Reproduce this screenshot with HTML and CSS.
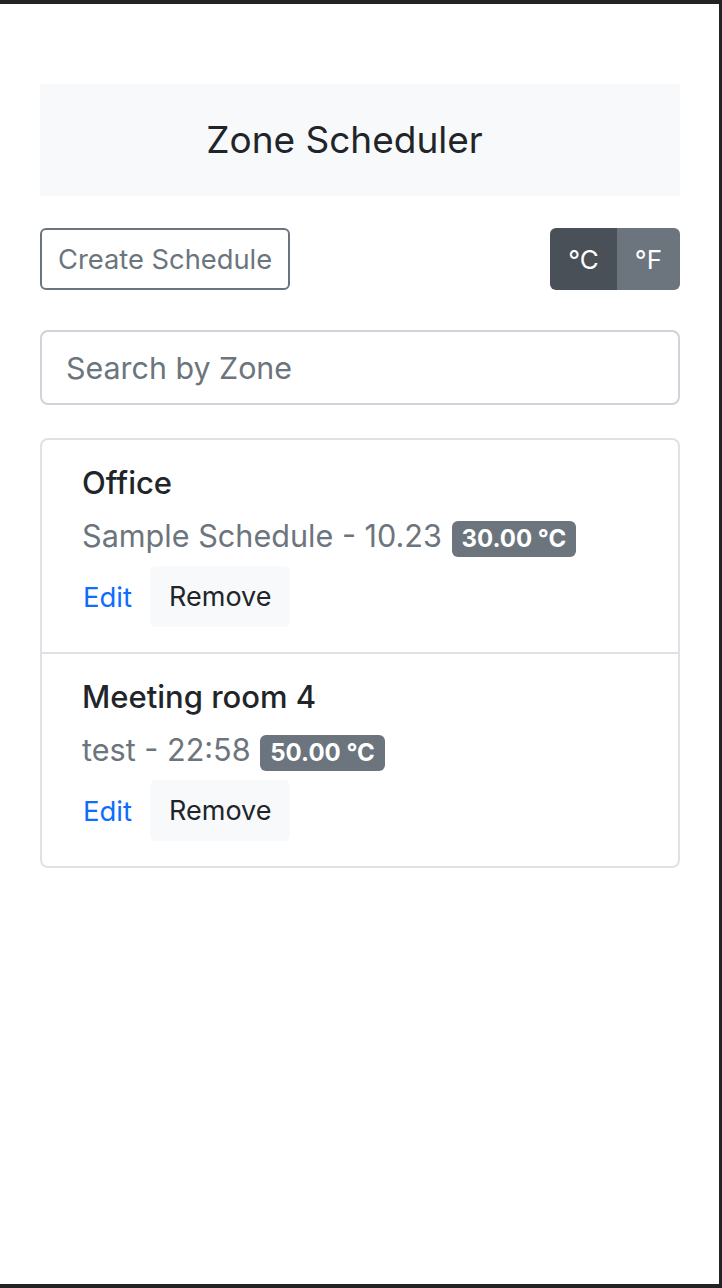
FILE: index.html
```html
<!DOCTYPE html>
<html lang="en">
<head>
<meta charset="utf-8">
<title>Zone Scheduler</title>
<link rel="stylesheet" href="styles.css">
</head>
<body>
<div class="frame">
  <main class="container">
    <header class="page-header">
      <h1 class="page-title">Zone Scheduler</h1>
    </header>
    <div class="toolbar">
      <button class="btn-outline" type="button">Create Schedule</button>
      <div class="unit-toggle">
        <button class="unit unit-active" type="button">°C</button>
        <button class="unit" type="button">°F</button>
      </div>
    </div>
    <input class="search" type="text" placeholder="Search by Zone">
    <ul class="list">
      <li class="item">
        <h5 class="item-title">Office</h5>
        <p class="item-text">Sample Schedule - 10.23 <span class="badge">30.00 °C</span></p>
        <div class="actions">
          <a class="link" href="#">Edit</a>
          <button class="btn-light" type="button">Remove</button>
        </div>
      </li>
      <li class="item">
        <h5 class="item-title">Meeting room 4</h5>
        <p class="item-text">test - 22:58 <span class="badge">50.00 °C</span></p>
        <div class="actions">
          <a class="link" href="#">Edit</a>
          <button class="btn-light" type="button">Remove</button>
        </div>
      </li>
    </ul>
  </main>
</div>
</body>
</html>
```

FILE: styles.css
```css
* { box-sizing: border-box; }
html, body { margin: 0; padding: 0; background: #fff; }
body {
  font-family: Inter, "Noto Sans", "Liberation Sans", sans-serif;
  color: #212529;
}
.frame {
  height: 1288px;
  border-top: 4px solid #232323;
  border-right: 3px solid #232323;
  border-bottom: 4px solid #232323;
}
.container {
  width: 640px;
  margin-left: 40px;
  padding-top: 80px;
  display: flex;
  flex-direction: column;
}
.page-header {
  height: 112px;
  background: #f8f9fa;
  display: flex;
  align-items: center;
  justify-content: center;
  padding-right: 31px;
}
.page-title {
  margin: 0;
  font-size: 37px;
  font-weight: 400;
  line-height: 1.2;
  color: #212529;
}
.toolbar {
  margin-top: 32px;
  display: flex;
  justify-content: space-between;
  align-items: center;
}
.btn-outline {
  height: 62px;
  padding: 0 16px;
  border: 2px solid #6c757d;
  border-radius: 6px;
  background: #fff;
  color: #6c757d;
  font-family: inherit;
  font-size: 27.3px;
}
.unit-toggle {
  display: flex;
  height: 62px;
  border-radius: 6px;
  overflow: hidden;
}
.unit {
  border: 0;
  padding: 0 18px;
  background: #6c757d;
  color: #fff;
  font-family: inherit;
  font-size: 26px;
}
.unit-active { background: #495057; }
.search {
  margin-top: 40px;
  height: 75px;
  width: 100%;
  padding: 0 24px;
  border: 2px solid #ced4da;
  border-radius: 8px;
  font-family: inherit;
  font-size: 30.4px;
  color: #495057;
}
.search::placeholder { color: #6c757d; opacity: 1; }
.list {
  margin: 33px 0 0;
  padding: 0;
  list-style: none;
  border: 2px solid #dee2e6;
  border-radius: 8px;
}
.item {
  padding: 25px 40px 25px;
}
.item + .item { border-top: 2px solid #dee2e6; }
.item-title {
  margin: 0 0 12px;
  font-size: 31px;
  font-weight: 450;
  line-height: 36px;
  color: #212529;
}
.item-text {
  margin: 0;
  font-size: 30.6px;
  line-height: 45px;
  color: #6c757d;
}
.badge {
  display: inline-block;
  margin-left: 1px;
  padding: 6px 10px;
  border-radius: 6px;
  background: #6c757d;
  color: #fff;
  font-size: 24px;
  font-weight: 700;
  line-height: 24px;
  vertical-align: baseline;
}
.actions {
  margin-top: 8px;
  display: flex;
  align-items: center;
  gap: 18px;
}
.link {
  color: #0d6efd;
  text-decoration: none;
  font-size: 27.5px;
  padding-left: 1px;
}
.btn-light {
  height: 61px;
  padding: 0 19px;
  border: 0;
  border-radius: 6px;
  background: #f8f9fa;
  color: #212529;
  font-family: inherit;
  font-size: 27px;
}
```
